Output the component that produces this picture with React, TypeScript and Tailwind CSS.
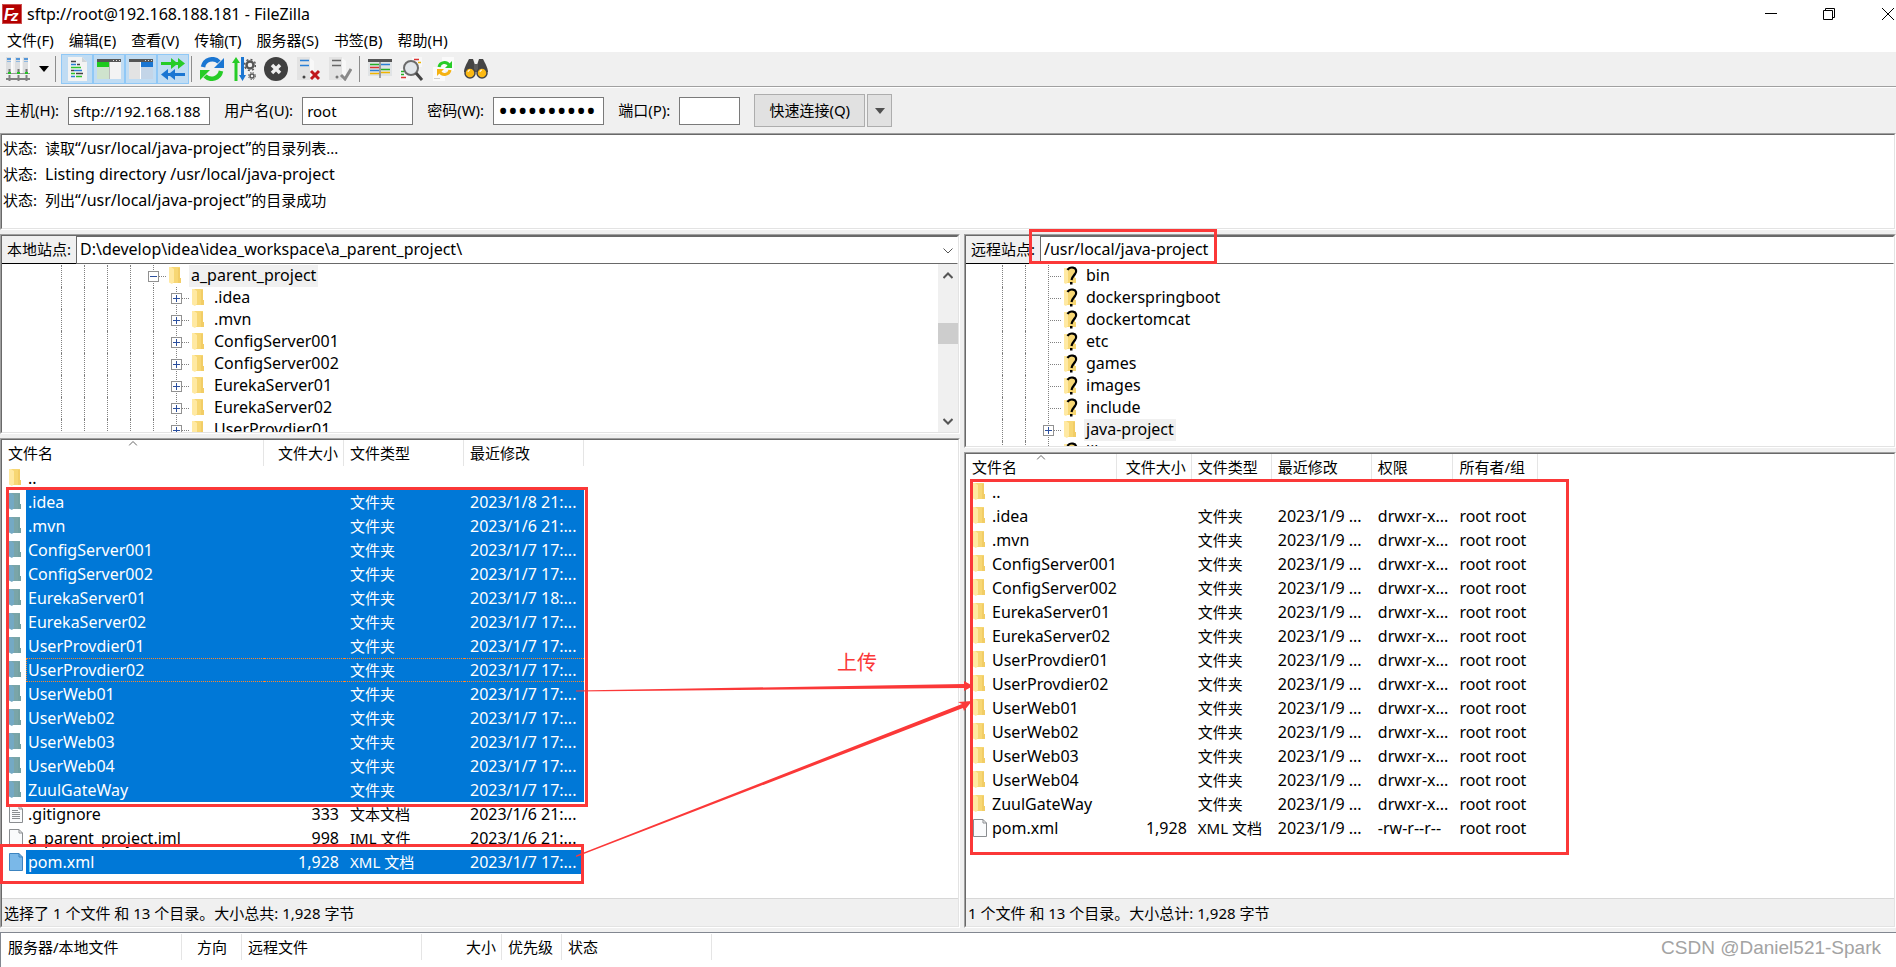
import type { ReactNode } from "react"

interface FileRow {
  name: string
  size?: string
  type?: string
  modified?: string
  perms?: string
  owner?: string
  icon: "folder" | "file" | "text"
  selected?: boolean
  focused?: boolean
}

interface Column {
  title: string
  width: string
  align?: string
}

const projects = [
  ".idea",
  ".mvn",
  "ConfigServer001",
  "ConfigServer002",
  "EurekaServer01",
  "EurekaServer02",
  "UserProvdier01",
  "UserProvdier02",
  "UserWeb01",
  "UserWeb02",
  "UserWeb03",
  "UserWeb04",
  "ZuulGateWay",
]

const localDates: Record<string, string> = {
  ".idea": "2023/1/8 21:...",
  ".mvn": "2023/1/6 21:...",
  EurekaServer01: "2023/1/7 18:...",
}

const localFiles: FileRow[] = [
  { name: "..", icon: "folder" },
  ...projects.map((name): FileRow => ({
    name,
    type: "文件夹",
    modified: localDates[name] || "2023/1/7 17:...",
    icon: "folder",
    selected: true,
    focused: name === "UserProvdier02",
  })),
  { name: ".gitignore", size: "333", type: "文本文档", modified: "2023/1/6 21:...", icon: "text" },
  { name: "a_parent_project.iml", size: "998", type: "IML 文件", modified: "2023/1/6 21:...", icon: "file" },
  { name: "pom.xml", size: "1,928", type: "XML 文档", modified: "2023/1/7 17:...", icon: "file", selected: true },
]

const remoteFiles: FileRow[] = [
  { name: "..", icon: "folder" },
  ...projects.map((name): FileRow => ({
    name,
    type: "文件夹",
    modified: "2023/1/9 ...",
    perms: "drwxr-x...",
    owner: "root root",
    icon: "folder",
  })),
  {
    name: "pom.xml",
    size: "1,928",
    type: "XML 文档",
    modified: "2023/1/9 ...",
    perms: "-rw-r--r--",
    owner: "root root",
    icon: "file",
  },
]

const localColumns: Column[] = [
  { title: "文件名", width: "w-[262px]" },
  { title: "文件大小", width: "w-[80px]", align: "text-right" },
  { title: "文件类型", width: "w-[120px]" },
  { title: "最近修改", width: "w-[120px]" },
]

const remoteColumns: Column[] = [
  { title: "文件名", width: "w-[150px]" },
  { title: "文件大小", width: "w-[75px]", align: "text-right" },
  { title: "文件类型", width: "w-[80px]" },
  { title: "最近修改", width: "w-[100px]" },
  { title: "权限", width: "w-[80px]" },
  { title: "所有者/组", width: "w-[85px]" },
]

const queueColumns: Column[] = [
  { title: "服务器/本地文件", width: "w-[180px]" },
  { title: "方向", width: "w-[60px]", align: "text-center" },
  { title: "远程文件", width: "w-[180px]" },
  { title: "大小", width: "w-[80px]", align: "text-right" },
  { title: "优先级", width: "w-[60px]" },
  { title: "状态", width: "w-[150px]" },
]

const menus = ["文件(F)", "编辑(E)", "查看(V)", "传输(T)", "服务器(S)", "书签(B)", "帮助(H)"]

const logs = [
  ["读取", "“/usr/local/java-project”", "的目录列表..."],
  ["", "Listing directory /usr/local/java-project", ""],
  ["列出", "“/usr/local/java-project”", "的目录成功"],
]

/* ---------- icons ---------- */

function FolderIcon({ selected }: { selected?: boolean }) {
  return (
    <svg width="12" height="18" viewBox="0 0 12 18" className="shrink-0">
      <path d="M2 0h9v11h1v5H3z" fill={selected ? "#7aa5a8" : "#f7d774"} />
      <path d="M0 0h2l3 2v13l-2 2-3-1.500z" fill={selected ? "#74a9c4" : "#ffe9a2"} />
      <path d="M9 1h2v10h1v5H9z" fill={selected ? "#6f9fa0" : "#efc75e"} opacity="0.6" />
    </svg>
  )
}

function UnknownIcon() {
  return (
    <svg width="13" height="18" viewBox="0 0 13 18" className="-mr-px shrink-0 overflow-visible">
      <path d="M2 1h9v10h1v5H3z" fill="#f7d774" />
      <path d="M0 1h2l2 2v12l-2 2-2-1z" fill="#ffe9a2" />
      <path d="M3.500 3C5 .5 7 .3 9 .6c3.500.6 4 4 2 6.400C9.500 9 8 9.500 7.500 13" fill="none" stroke="#000" strokeWidth="2.200" />
      <rect x="6" y="15" width="2.500" height="2.500" fill="#000" />
    </svg>
  )
}

function FileIcon({ selected, lines }: { selected?: boolean; lines?: boolean }) {
  return (
    <svg width="14" height="18" viewBox="0 0 14 18" className="shrink-0">
      <path d="M.5.5H10L13.500 4v13.500H.5z" fill={selected ? "#7ab8e8" : "#fafbfc"} stroke={selected ? "#3c84c0" : "#8a8d90"} />
      <path d="M10 .5V4h3.500" fill="none" stroke={selected ? "#3c84c0" : "#8a8d90"} />
      {lines && <path d="M3 5.500h6M3 7.500h8M3 9.500h8M3 11.500h8M3 13.500h8" stroke="#8a8d90" />}
    </svg>
  )
}

function Logo() {
  return (
    <svg width="20" height="20" viewBox="0 0 20 20">
      <rect width="20" height="20" fill="#b30000" />
      <rect x=".5" y=".5" width="19" height="19" fill="none" stroke="#e9a0a0" strokeDasharray="1 1" />
      <text x="2" y="16" fontSize="16" fontWeight="bold" fontStyle="italic" fontFamily="Liberation Sans, sans-serif" fill="#fff">
        F
      </text>
      <text x="9" y="17" fontSize="15" fontWeight="bold" fontStyle="italic" fontFamily="Liberation Sans, sans-serif" fill="#fff">
        z
      </text>
    </svg>
  )
}

function Icon({ children }: { children: ReactNode }) {
  return (
    <svg width="24" height="24" viewBox="0 0 24 24">
      {children}
    </svg>
  )
}

const sitesIcon = (
  <Icon>
    {[0, 9, 17].map((x) => (
      <g key={x}>
        <path d={`M${x} 0h5v17h-5z`} fill="#dcdee0" />
        <path d={`M${x + 5} 1l2 1v14l-2 1z`} fill="#fafafa" />
        <path d={`M${x + 1} 2h4`} stroke="#2a7fd6" strokeWidth="1.500" />
        <path d={`M${x + 1} 4.500h4`} stroke="#8fb9e2" />
        <path d={`M${x + 3.500} 12v3`} stroke="#777" strokeWidth="2" />
      </g>
    ))}
    <path d="M0 16.500h24" stroke="#999" />
    <path d="M2 16h3M11 16h3M19 16h3" stroke="#25c025" strokeWidth="2" />
    <path d="M0 22h24M3.500 18v6M12.500 18v6M20.500 18v6" stroke="#808080" strokeWidth="2" />
  </Icon>
)

const logIcon = (
  <Icon>
    <path d="M3 0h14l5 5v19H3z" fill="#f3f3f3" />
    <path d="M17 0v5h5z" fill="#cfd4d8" />
    <path d="M6 4.500h5M12 7.500h3M6 13.500h3M11 16.500h7" stroke="#444" strokeWidth="1.500" />
    <path d="M6 7.500h5M9 13.500h8M6 19.500h4" stroke="#2a7fd6" strokeWidth="1.500" />
    <path d="M6 10.500h10M6 16.500h4M11 19.500h6" stroke="#2dc52d" strokeWidth="1.500" />
  </Icon>
)

const localTreeIcon = (
  <Icon>
    <path d="M0 2h24v20H0z" fill="#f3f3f3" />
    <path d="M0 2h24v3H0z" fill="#555" />
    <path d="M16 3.500h1M19 3.500h1M22 3.500h1" stroke="#ddd" />
    <path d="M0 5h12v5H0z" fill="#1ec91e" />
    <path d="M0 10h12v12H0z" fill="#cfe3cd" />
    <path d="M12.500 5v17" stroke="#bbb" />
  </Icon>
)

const remoteTreeIcon = (
  <Icon>
    <path d="M0 2h24v20H0z" fill="#e3e3e3" />
    <path d="M0 2h24v3H0z" fill="#555" />
    <path d="M16 3.500h1M19 3.500h1M22 3.500h1" stroke="#ddd" />
    <path d="M12 5h12v5H12z" fill="#1b76d2" />
    <path d="M12 10h12v12H12z" fill="#c3d5e8" />
    <path d="M11.500 5v17" stroke="#fff" />
  </Icon>
)

const queueIcon = (
  <Icon>
    <path d="M0 5h10V1l5 4h2V1l7 5.500-7 5.500V8h-2l-5 4V8H0z" fill="#27cc27" />
    <path d="M24 16H14v-4l-5 4H7v-4l-7 5.500L7 23v-4h2l5 4v-4h10z" fill="#1b76d2" />
  </Icon>
)

const refreshIcon = (
  <Icon>
    <path d="M3 10a9.500 9.500 0 0 1 16-5" fill="none" stroke="#1b76d2" strokeWidth="4.500" />
    <path d="M24 1v10H14z" fill="#1b76d2" />
    <path d="M21 14a9.500 9.500 0 0 1-16 5" fill="none" stroke="#27cc27" strokeWidth="4.500" />
    <path d="M0 23V13h10z" fill="#27cc27" />
  </Icon>
)

const processIcon = (
  <Icon>
    <path d="M4 0L0 6h2.500v18h3V6H8z" fill="#27cc27" />
    <path d="M9 0h3v18h2L10.500 24 7 18h2z" fill="#1b76d2" />
    <circle cx="18" cy="8" r="3.500" fill="none" stroke="#555" strokeWidth="2.500" />
    <circle cx="18" cy="8" r="5.500" fill="none" stroke="#555" strokeWidth="1.500" strokeDasharray="2 2.300" />
    <circle cx="20" cy="19" r="2" fill="none" stroke="#555" strokeWidth="1.500" />
    <circle cx="20" cy="19" r="3.500" fill="none" stroke="#555" strokeDasharray="1.400 1.400" />
  </Icon>
)

const cancelIcon = (
  <Icon>
    <circle cx="12" cy="12" r="12" fill="#404040" />
    <path d="M8 8l8 8M16 8l-8 8" stroke="#eee" strokeWidth="3.500" />
  </Icon>
)

const disconnectIcon = (
  <Icon>
    <path d="M1 0h13v23H1z" fill="#e3e3e3" />
    <path d="M14 1l4 3v18h-4z" fill="#f8f8f8" />
    <path d="M4 3.500h9M4 8.500h9" stroke="#2a7fd6" strokeWidth="1.500" />
    <circle cx="8" cy="20" r="1.500" fill="#444" />
    <path d="M15 14l8 8M23 14l-8 8" stroke="#c0181c" strokeWidth="3" />
  </Icon>
)

const reconnectIcon = (
  <Icon>
    <path d="M1 0h13v23H1z" fill="#e3e3e3" />
    <path d="M14 1l4 3v18h-4z" fill="#f8f8f8" />
    <path d="M4 3.500h9M4 8.500h9" stroke="#666" strokeWidth="1.500" />
    <circle cx="9" cy="20" r="1.500" fill="#777" />
    <path d="M13 18l4 4 6-10" fill="none" stroke="#8a8a8a" strokeWidth="3" />
  </Icon>
)

const filterIcon = (
  <Icon>
    <path d="M0 2h24v17H0z" fill="#e0e3e5" />
    <path d="M0 2h24v3H0z" fill="#555" />
    <path d="M2 7.500h9M13 12.500h9" stroke="#27b027" strokeWidth="1.500" />
    <path d="M2 10.500h9" stroke="#d33" strokeWidth="1.500" />
    <path d="M2 13.500h9M13 7.500h9" stroke="#2a7fd6" strokeWidth="1.500" />
    <path d="M2 16.500h9M13 15.500h9" stroke="#f0b400" strokeWidth="1.500" />
    <path d="M12 5v16" stroke="#555" />
  </Icon>
)

const searchIcon = (
  <Icon>
    <path d="M12 0h10v10H12zM0 12h10v12H0z" fill="#f8f8f8" />
    <path d="M14 2.500h5" stroke="#d33" strokeWidth="1.500" />
    <path d="M18 5.500h3" stroke="#f0b400" strokeWidth="1.500" />
    <path d="M1 14.500h3M1 17.500h3" stroke="#27b027" strokeWidth="1.500" />
    <path d="M1 20.500h5" stroke="#d33" strokeWidth="1.500" />
    <circle cx="11" cy="11" r="7" fill="#e2e6ea" stroke="#6b6b6b" strokeWidth="2" />
    <path d="M16 16l6 7" stroke="#444" strokeWidth="3" />
  </Icon>
)

const syncIcon = (
  <Icon>
    <path d="M10 0h12v14H10zM1 10h12v14H1z" fill="#fafafa" />
    <path d="M7 10a5.500 5.500 0 0 1 10-2" fill="none" stroke="#27cc27" strokeWidth="3" />
    <path d="M20 4v7h-7z" fill="#27cc27" />
    <path d="M18 13a5.500 5.500 0 0 1-10 2" fill="none" stroke="#f5b212" strokeWidth="3" />
    <path d="M5 19v-7h7z" fill="#f5b212" />
    <path d="M2 21.500h6" stroke="#ccc" />
  </Icon>
)

const compareIcon = (
  <Icon>
    <path d="M5 2h4l2 6v7H0c0-4 3-9 5-13zM19 2h-4l-2 6v7h11c0-4-3-9-5-13z" fill="#454545" />
    <path d="M10 7h4v8h-4z" fill="#5c5c5c" />
    <circle cx="6" cy="16" r="5" fill="#fcb913" stroke="#454545" strokeWidth="1.500" />
    <circle cx="18" cy="16" r="5" fill="#fcb913" stroke="#454545" strokeWidth="1.500" />
    <path d="M4 15a2 2 0 0 1 2-2M16 15a2 2 0 0 1 2-2" stroke="#fff" fill="none" />
  </Icon>
)

const toggles = [
  { label: "消息日志", icon: logIcon },
  { label: "本地目录树", icon: localTreeIcon },
  { label: "远程目录树", icon: remoteTreeIcon },
  { label: "传输队列", icon: queueIcon },
]

const actions = [
  { label: "刷新", icon: refreshIcon },
  { label: "处理队列", icon: processIcon },
  { label: "取消", icon: cancelIcon },
  { label: "断开", icon: disconnectIcon },
  { label: "重新连接", icon: reconnectIcon },
]

const tools = [
  { label: "过滤", icon: filterIcon },
  { label: "对比", icon: searchIcon },
  { label: "同步浏览", icon: syncIcon },
  { label: "查找", icon: compareIcon },
]

function Separator() {
  return <span className="h-[26px] w-px bg-[#8d8d8d]" />
}

function Caret() {
  return (
    <svg width="10" height="6" viewBox="0 0 10 6">
      <path d="M0 0h10L5 6z" fill="currentColor" />
    </svg>
  )
}

/* ---------- shared pieces ---------- */

function Sunken({ children, className = "" }: { children: ReactNode; className?: string }) {
  return (
    <div className={`flex flex-col border border-t-[#a0a0a0] border-r-white border-b-white border-l-[#a0a0a0] ${className}`}>
      <div className="flex flex-1 flex-col border border-t-[#696969] border-r-[#e3e3e3] border-b-[#e3e3e3] border-l-[#696969] bg-white">
        {children}
      </div>
    </div>
  )
}

function SiteBar({ id, label, path, chevron }: { id: string; label: string; path: string; chevron?: boolean }) {
  return (
    <div className="flex h-7">
      <label htmlFor={id} className="w-[74px] border-b border-black bg-[#f0f0f0] pl-[5px] leading-[26px]">
        {label}
      </label>
      <div className="relative flex-1">
        <select
          id={id}
          className="h-7 w-full appearance-none border border-[#696969] border-r-white bg-white pb-[2px] pl-[3px] text-base leading-6"
        >
          <option>{path}</option>
        </select>
        {chevron && (
          <svg width="10" height="6" viewBox="0 0 10 6" className="absolute top-[12px] right-[5px]">
            <path d="M.5.5L5 5 9.500.5" fill="none" stroke="#555" />
          </svg>
        )}
      </div>
    </div>
  )
}

function TreeNode({ box }: { box?: "+" | "-" }) {
  return (
    <svg width="16" height="22" viewBox="0 0 16 22" className="shrink-0 overflow-visible">
      <path d="M.5 0v22" stroke="#808080" strokeDasharray="1 1" />
      <path d="M2 11.500h11" stroke="#808080" strokeDasharray="1 1" />
      {box && (
        <>
          <rect x="-4.500" y="6.500" width="10" height="10" fill="#fff" stroke="#919191" />
          <path d={box === "+" ? "M-3 11.500h7M.5 8v7" : "M-3 11.500h7"} stroke="#2b4f9e" />
        </>
      )}
    </svg>
  )
}

interface TreeItem {
  name: string
  depth: number
  box?: "+" | "-"
  unknown?: boolean
  current?: boolean
}

function Tree({ items, className }: { items: TreeItem[]; className: string }) {
  return (
    <ul className={`flex-1 overflow-hidden text-base ${className}`}>
      {items.map((item) => (
        <li key={item.name} className="flex h-[22px] items-center">
          {Array.from({ length: item.depth }, (_, i) => (
            <span key={i} className="h-full w-[23px] shrink-0 border-l border-dotted border-[#808080]" />
          ))}
          <TreeNode box={item.box} />
          {item.unknown ? <UnknownIcon /> : <FolderIcon />}
          <span className={`ml-2 px-[2px] pb-[2px] leading-5 ${item.current ? "bg-[#f0f0f0]" : ""}`}>{item.name}</span>
        </li>
      ))}
    </ul>
  )
}

const localTree: TreeItem[] = [
  { name: "a_parent_project", depth: 4, box: "-", current: true },
  ...projects.slice(0, 7).map((name): TreeItem => ({ name, depth: 5, box: "+" })),
]

const remoteTree: TreeItem[] = [
  ...["bin", "dockerspringboot", "dockertomcat", "etc", "games", "images", "include"].map(
    (name): TreeItem => ({ name, depth: 2, unknown: true })
  ),
  { name: "java-project", depth: 2, box: "+", current: true },
  { name: "lib", depth: 2, unknown: true },
]

function HeadRow({ columns, sorted }: { columns: Column[]; sorted?: boolean }) {
  return (
    <thead>
      <tr className="h-[26px]">
        {columns.map((col, i) => (
          <th
            key={col.title}
            className={`relative border-r border-[#e5e5e5] px-[5px] pl-[6px] font-normal leading-[26px] whitespace-nowrap ${col.width} ${col.align || "text-left"}`}
          >
            {col.title}
            {sorted && i === 0 && (
              <svg width="9" height="5" viewBox="0 0 9 5" className="absolute top-px left-1/2 -translate-x-1/2">
                <path d="M.5 4.500l4-4 4 4" fill="none" stroke="#666" />
              </svg>
            )}
          </th>
        ))}
      </tr>
    </thead>
  )
}

function FileTable({ files, columns, remote }: { files: FileRow[]; columns: Column[]; remote?: boolean }) {
  return (
    <table className="w-max table-fixed border-separate border-spacing-0">
      <HeadRow columns={columns} sorted />
      <tbody>
        {files.map((file) => {
          const bg = file.selected ? "bg-[#0078d7] text-white" : ""
          const focus = file.focused ? "border-y border-dotted border-[#ff8728]" : ""
          const lineHeight = file.focused ? "leading-[22px]" : "leading-6"
          const cell = `h-6 px-[5px] pl-[6px] py-0 whitespace-nowrap ${bg} ${focus} ${lineHeight}`
          return (
            <tr key={file.name}>
              <td className="h-6 p-0">
                <div className="flex h-6 text-base">
                  <span className="flex w-6 shrink-0 items-center pl-[7px]">
                    {file.icon === "folder" ? (
                      <FolderIcon selected={file.selected} />
                    ) : (
                      <FileIcon selected={file.selected} lines={file.icon === "text"} />
                    )}
                  </span>
                  <span className={`flex-1 ${bg} ${focus} ${lineHeight} ${file.focused ? "border-l pl-px" : "pl-[2px]"}`}>
                    {file.name}
                  </span>
                </div>
              </td>
              <td className={`${cell} text-right text-base`}>{file.size}</td>
              <td className={cell}>{file.type}</td>
              <td className={`${cell} text-base`}>{file.modified}</td>
              {remote && <td className={`${cell} text-base`}>{file.perms}</td>}
              {remote && <td className={`${cell} text-base`}>{file.owner}</td>}
            </tr>
          )
        })}
      </tbody>
    </table>
  )
}

function StatusBar({ children }: { children: ReactNode }) {
  return <div className="mt-auto h-7 border-t border-[#d7d7d7] bg-[#f0f0f0] pl-[2px] leading-7">{children}</div>
}

function Field({ id, label, value, className, type = "text" }: { id: string; label: string; value: string; className: string; type?: string }) {
  return (
    <div className="flex items-center">
      <label htmlFor={id} className="mr-[9px]">
        {label}
      </label>
      <input
        id={id}
        type={type}
        defaultValue={value}
        className={`h-7 border border-[#7a7a7a] bg-white px-1 outline-none ${className}`}
      />
    </div>
  )
}

/* red marks drawn over the window */
function Annotations() {
  return (
    <>
      <div className="absolute top-[487px] left-[6px] h-[320px] w-[582px] border-3 border-[#fb3838]" />
      <div className="absolute top-[844px] left-0 h-[40px] w-[584px] border-3 border-[#fb3838]" />
      <div className="absolute top-[229px] left-[1029px] h-[35px] w-[188px] border-3 border-[#fb3838]" />
      <div className="absolute top-[479px] left-[970px] h-[376px] w-[599px] border-3 border-[#fb3838]" />
      <svg width="400" height="180" viewBox="0 0 400 180" className="absolute top-[680px] left-[576px]">
        <path d="M0 10.500L388 4V1l9 5-9 5V8L0 11.500z" fill="#fb3838" />
        <path d="M0 175.500L386 24l-4-2 14-1-8 10-1-3L0 177z" fill="#fb3838" />
      </svg>
      <span className="absolute top-[650px] left-[837px] text-xl leading-[26px] text-[#fb3838]">上传</span>
    </>
  )
}

export default function App() {
  return (
    <div className="relative flex min-h-screen flex-col overflow-hidden bg-[#f0f0f0] font-['Noto_Sans','Noto_Sans_CJK_SC',sans-serif] text-[15px] text-black">
      <header className="bg-white">
        <div className="flex h-7 items-center pl-[2px]">
          <Logo />
          <h1 className="ml-[5px] text-base leading-7">sftp://root@192.168.188.181 - FileZilla</h1>
          <div className="ml-auto flex items-center">
            <button aria-label="最小化" className="flex w-[58px] justify-center">
              <svg width="12" height="12" viewBox="0 0 12 12">
                <path d="M0 5.500h12" stroke="#000" />
              </svg>
            </button>
            <button aria-label="还原" className="flex w-[58px] justify-center">
              <svg width="12" height="12" viewBox="0 0 12 12">
                <path d="M.5 2.500h9v9h-9zM2.500 2.500v-2h9v9h-2" fill="none" stroke="#000" />
              </svg>
            </button>
            <button aria-label="关闭" className="flex w-[38px] justify-end pr-[2px]">
              <svg width="12" height="12" viewBox="0 0 12 12">
                <path d="M0 0l12 12M12 0L0 12" stroke="#000" />
              </svg>
            </button>
          </div>
        </div>
        <nav className="flex h-6 gap-[15px] pl-[7px]">
          {menus.map((menu) => (
            <button key={menu} className="leading-6">
              {menu}
            </button>
          ))}
        </nav>
      </header>

      <div className="flex h-[35px] items-center border-b border-[#a0a0a0] pl-[6px]">
        <button aria-label="站点管理器">{sitesIcon}</button>
        <button aria-label="站点列表" className="mr-[6px] ml-[9px]">
          <Caret />
        </button>
        <Separator />
        <div className="mr-[2px] ml-[5px] flex">
          {toggles.map((t) => (
            <button
              key={t.label}
              aria-label={t.label}
              aria-pressed="true"
              className="flex h-[30px] w-8 items-center justify-center border border-[#90c8f6] bg-[#c0dcf3]"
            >
              {t.icon}
            </button>
          ))}
        </div>
        <Separator />
        <div className="mr-[7px] ml-2 flex gap-2">
          {actions.map((a) => (
            <button key={a.label} aria-label={a.label}>
              {a.icon}
            </button>
          ))}
        </div>
        <Separator />
        <div className="mx-2 flex gap-2">
          {tools.map((t) => (
            <button key={t.label} aria-label={t.label}>
              {t.icon}
            </button>
          ))}
        </div>
      </div>

      <form className="flex h-[46px] items-center gap-[14px] border-t border-white pl-[5px]">
        <Field id="host" label="主机(H):" value="sftp://192.168.188" className="w-[142px]" />
        <Field id="user" label="用户名(U):" value="root" className="w-[111px]" />
        <Field id="password" label="密码(W):" value="password12" className="w-[111px] text-[26px]" type="password" />
        <Field id="port" label="端口(P):" value="" className="w-[61px]" />
        <div className="flex gap-[2px]">
          <button type="button" className="h-[33px] w-[111px] border border-[#adadad] bg-[#e1e1e1]">
            快速连接(Q)
          </button>
          <button
            type="button"
            aria-label="连接历史"
            className="flex h-[33px] w-[25px] items-center justify-center border border-[#adadad] bg-[#e1e1e1] text-[#505050]"
          >
            <Caret />
          </button>
        </div>
      </form>

      <Sunken className="h-[97px]">
        <ul className="pl-px">
          {logs.map(([before, path, after]) => (
            <li key={before} className="flex h-[26px] leading-[26px]">
              <span className="w-[42px]">状态:</span>
              <span>
                {before}
                <span className="text-base leading-[26px]">{path}</span>
                {after}
              </span>
            </li>
          ))}
        </ul>
      </Sunken>

      <main className="mt-1 grid flex-1 grid-cols-[960fr_932fr] gap-1">
        <section className="flex min-w-0 flex-col gap-1">
          <Sunken>
            <SiteBar id="local" label="本地站点:" path="D:\develop\idea\idea_workspace\a_parent_project\" chevron />
            <div className="flex h-[168px]">
              <Tree items={localTree} className="pt-px pl-[59px]" />
              <div className="flex w-5 flex-col items-center bg-[#f0f0f0]">
                <svg width="10" height="7" viewBox="0 0 10 7" className="mt-2">
                  <path d="M.5 6L5 1.500 9.500 6" fill="none" stroke="#555" strokeWidth="2" />
                </svg>
                <span className="mt-11 h-[21px] w-full bg-[#cdcdcd]" />
                <svg width="10" height="7" viewBox="0 0 10 7" className="mt-auto mb-[7px]">
                  <path d="M.5 1L5 5.500 9.500 1" fill="none" stroke="#555" strokeWidth="2" />
                </svg>
              </div>
            </div>
          </Sunken>
          <Sunken className="flex-1">
            <FileTable files={localFiles} columns={localColumns} />
            <StatusBar>选择了 1 个文件 和 13 个目录。大小总共: 1,928 字节</StatusBar>
          </Sunken>
        </section>

        <section className="flex min-w-0 flex-col gap-1">
          <Sunken>
            <SiteBar id="remote" label="远程站点:" path="/usr/local/java-project" />
            <div className="flex h-[182px]">
              <Tree items={remoteTree} className="pt-px pl-[36px]" />
            </div>
          </Sunken>
          <Sunken className="flex-1">
            <FileTable files={remoteFiles} columns={remoteColumns} remote />
            <StatusBar>1 个文件 和 13 个目录。大小总计: 1,928 字节</StatusBar>
          </Sunken>
        </section>
      </main>

      <footer className="mt-1 flex h-[35px] items-start border-t border-l border-[#828790] bg-white pt-px pl-px">
        <table className="w-max table-fixed border-separate border-spacing-0">
          <HeadRow columns={queueColumns} />
        </table>
        <span className="mr-[15px] ml-auto font-['Liberation_Sans',sans-serif] text-[19px] leading-7 text-[#a3a3a3]">
          CSDN @Daniel521-Spark
        </span>
      </footer>

      <Annotations />
    </div>
  )
}
